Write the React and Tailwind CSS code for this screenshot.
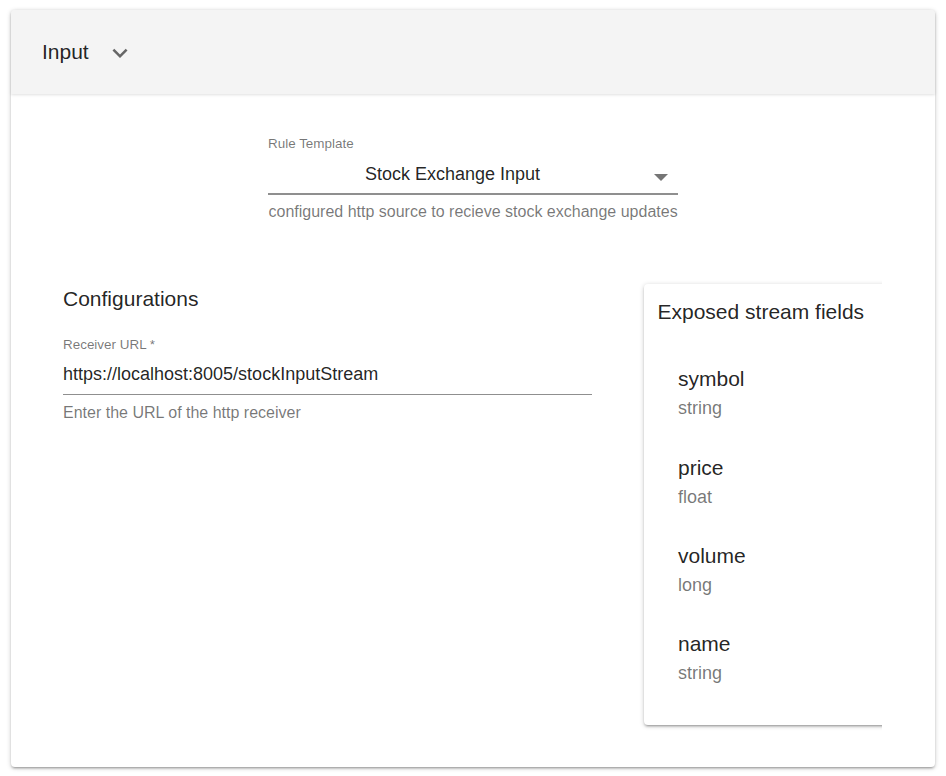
import React from "react";

const FIELDS = [
  { name: "symbol", type: "string" },
  { name: "price", type: "float" },
  { name: "volume", type: "long" },
  { name: "name", type: "string" },
];

export default function App() {
  return (
    <div className="h-[776px] overflow-hidden bg-white pl-[11px] pr-[11px] pt-[10px] font-['Liberation_Sans',sans-serif]">
      <div className="h-[757px] rounded-[4px] bg-white shadow-[0_1px_5px_0_rgba(0,0,0,0.2),0_2px_2px_0_rgba(0,0,0,0.14),0_3px_1px_-2px_rgba(0,0,0,0.12)]">
        <div className="relative flex h-[84px] items-center rounded-t-[4px] bg-[#f4f4f4] pl-[31px] shadow-[0_1px_3px_0_rgba(0,0,0,0.12)]">
          <span className="text-[21px] leading-[28px] text-[rgba(0,0,0,0.87)]">Input</span>
          <svg viewBox="0 0 24 24" className="ml-[16px] mt-[1px] h-[30px] w-[30px] fill-[#666666]">
            <path d="M16.59 8.59L12 13.17 7.41 8.59 6 10l6 6 6-6z" />
          </svg>
        </div>

        <div className="flex flex-col items-center pt-[42px]">
          <div className="w-[410px]">
            <div className="text-[13.44px] leading-[16px] text-[rgba(0,0,0,0.54)]">Rule Template</div>
            <div className="relative mt-[5px] h-[38px] border-b-[2px] border-[#8f8f8f] pt-[5px] text-center text-[18px] leading-[24px] text-[rgba(0,0,0,0.87)]">
              <span className="mr-[41px]">Stock Exchange Input</span>
              <span className="absolute right-[10px] top-[17px] h-0 w-0 border-x-[7px] border-t-[7px] border-x-transparent border-t-[#757575]" />
            </div>
            <div className="mt-[7px] whitespace-nowrap pl-[0.5px] text-[16px] leading-[20px] text-[rgba(0,0,0,0.54)]">
              configured http source to recieve stock exchange updates
            </div>
          </div>
        </div>

        <div className="mt-[58px] flex pl-[52px]">
          <div className="w-[529px] pt-[7px]">
            <div className="text-[21px] leading-[24px] text-[rgba(0,0,0,0.87)]">Configurations</div>
            <div className="mt-[26px] text-[13.44px] leading-[16px] text-[rgba(0,0,0,0.54)]">Receiver URL *</div>
            <div className="mt-[9px] h-[33px] border-b border-[#8f8f8f] text-[18px] leading-[24px] text-[rgba(0,0,0,0.87)]">
              https://localhost:8005/stockInputStream
            </div>
            <div className="mt-[8px] text-[16px] leading-[20px] text-[rgba(0,0,0,0.54)]">Enter the URL of the http receiver</div>
          </div>

          <div className="ml-[40px] w-[250px] overflow-hidden pb-[8px] pl-[12px] pt-[4px]">
            <div className="mr-[-8px] h-[441px] rounded-[4px] bg-white pl-[13.5px] pt-[14px] shadow-[0_1px_5px_0_rgba(0,0,0,0.2),0_2px_2px_0_rgba(0,0,0,0.14),0_3px_1px_-2px_rgba(0,0,0,0.12)]">
              <div className="text-[21px] leading-[28px] text-[rgba(0,0,0,0.87)]">Exposed stream fields</div>
              <ul className="mt-[39.4px] pl-[20.5px]">
                {FIELDS.map((f) => (
                  <li key={f.name} className="h-[88.3px]">
                    <div className="text-[21px] leading-[28px] text-[rgba(0,0,0,0.87)]">{f.name}</div>
                    <div className="mt-[1px] text-[18px] leading-[28px] text-[rgba(0,0,0,0.54)]">{f.type}</div>
                  </li>
                ))}
              </ul>
            </div>
          </div>
        </div>
      </div>
    </div>
  );
}
